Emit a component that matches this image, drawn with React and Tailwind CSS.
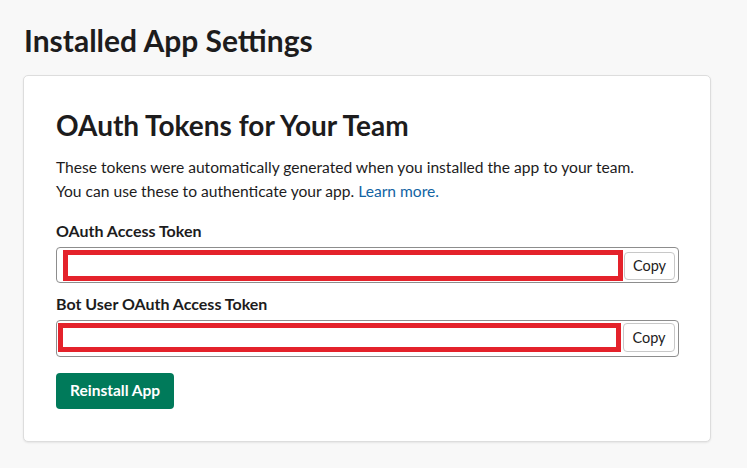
export default function App() {
  return (
    <div className="min-h-[468px] w-[747px] bg-[#f8f8f8] text-[#1d1c1d] pl-[23px] pt-[22px] pr-[36px]" style={{ fontFamily: "Lato, 'Liberation Sans', sans-serif" }}>
      <h1 className="text-[30px] font-bold leading-[36px] pl-[1px]">Installed App Settings</h1>
      <div className="mt-[17px] bg-white border border-[#dddddd] rounded-[5px] shadow-[0_1px_2px_rgba(0,0,0,0.08)] pl-[32px] pr-[31px] pt-[31px] pb-[32px]">
        <h2 className="text-[28px] font-bold leading-[36px]">OAuth Tokens for Your Team</h2>
        <p className="mt-[12px] text-[15.6px] leading-[24px] text-[#1d1c1d]">
          These tokens were automatically generated when you installed the app to your team.
          <br />
          You can use these to authenticate your app. <span className="text-[#1264a3]">Learn more.</span>
        </p>
        <div className="mt-[17px] text-[16px] font-bold leading-[22px]">OAuth Access Token</div>
        <div className="mt-[5px] h-[36px] border border-[#8d8d8d] rounded-[4px] flex items-stretch pl-[6px] pr-[3px] pt-[2px] pb-[1px] gap-[1px]">
          <div className="flex-1 border-[5px] border-[#e4222b]" />
          <div className="self-center h-[28px] w-[51px] border border-[#c8c8c8] rounded-[4px] flex items-center justify-center text-[14.5px] bg-white">Copy</div>
        </div>
        <div className="mt-[10px] text-[16px] font-bold leading-[22px]">Bot User OAuth Access Token</div>
        <div className="mt-[5px] h-[37px] border border-[#8d8d8d] rounded-[4px] flex items-stretch pl-[1px] pr-[3px] pt-[2px] pb-[4px] gap-[2px]">
          <div className="flex-1 border-[5px] border-[#e4222b]" />
          <div className="self-center h-[29px] w-[52px] border border-[#c8c8c8] rounded-[4px] flex items-center justify-center text-[14.5px] bg-white">Copy</div>
        </div>
        <button className="mt-[16px] h-[36px] px-[14px] bg-[#007a5a] text-white text-[15.5px] font-bold rounded-[4px]">Reinstall App</button>
      </div>
    </div>
  );
}
